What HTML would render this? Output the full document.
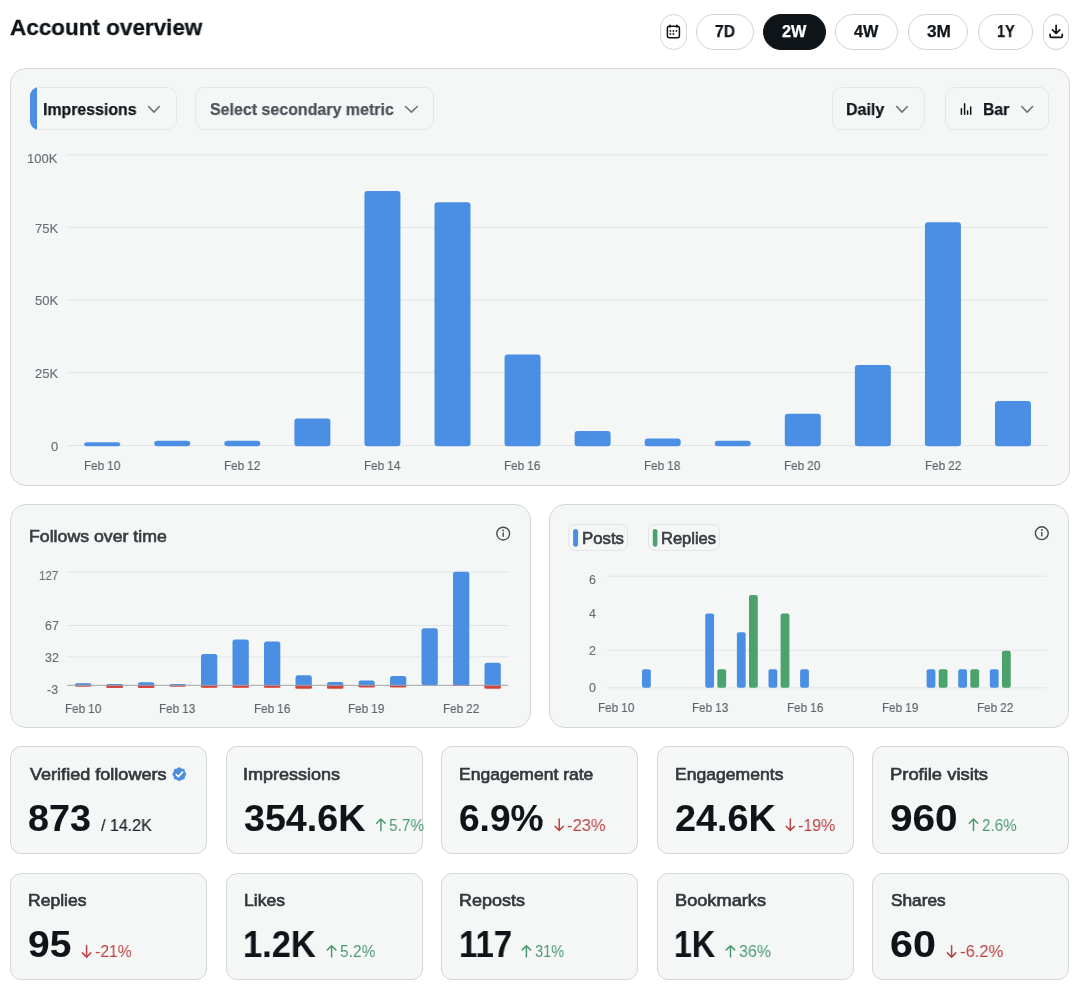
<!DOCTYPE html>
<html><head><meta charset="utf-8"><title>Account overview</title>
<style>
html,body{margin:0;padding:0;background:#ffffff;}
body{width:1080px;height:1002px;position:relative;overflow:hidden;font-family:"Liberation Sans", sans-serif;}
.card{position:absolute;box-sizing:border-box;background:#f5f7f7;border:1px solid #d4d7d8;}
.dd{position:absolute;box-sizing:border-box;background:#f5f7f7;border:1px solid #e5e7e9;border-radius:9px;}
.chip{position:absolute;box-sizing:border-box;background:#f5f7f7;border:1px solid #e3e6e8;border-radius:7px;}
.pill{position:absolute;box-sizing:border-box;border:1px solid #d2d4d5;border-radius:18px;}
.t{position:absolute;white-space:nowrap;line-height:1;transform-origin:0 0;will-change:transform;}
svg.ov{position:absolute;left:0;top:0;}
</style></head><body>
<div class="pill" style="left:660px;top:14px;width:27.0px;height:35.7px;background:#ffffff;border-color:#d2d4d5"></div>
<div class="pill" style="left:696px;top:14px;width:58.0px;height:35.7px;background:#ffffff;border-color:#d2d4d5"></div>
<div class="pill" style="left:763.3px;top:14px;width:62.5px;height:35.7px;background:#0f1419;border-color:#0f1419"></div>
<div class="pill" style="left:835.1px;top:14px;width:62.7px;height:35.7px;background:#ffffff;border-color:#d2d4d5"></div>
<div class="pill" style="left:907.5px;top:14px;width:60.8px;height:35.7px;background:#ffffff;border-color:#d2d4d5"></div>
<div class="pill" style="left:978.3px;top:14px;width:55.0px;height:35.7px;background:#ffffff;border-color:#d2d4d5"></div>
<div class="pill" style="left:1043px;top:14px;width:26.2px;height:35.7px;background:#ffffff;border-color:#d2d4d5"></div>
<div class="card" style="left:10px;top:68px;width:1059.5px;height:418px;border-radius:16px"></div>
<div style="position:absolute;left:30px;top:87px;width:146.5px;height:43px;border-radius:9px;overflow:hidden"><div class="dd" style="left:0;top:0;width:146.5px;height:43px"></div><div style="position:absolute;left:0;top:0;width:6.7px;height:43px;background:#4a8fe3"></div></div>
<div class="dd" style="left:195.2px;top:87px;width:239px;height:43px"></div>
<div class="dd" style="left:831.6px;top:87px;width:93.3px;height:43px"></div>
<div class="dd" style="left:944.9px;top:87px;width:104.4px;height:43px"></div>
<div class="card" style="left:10px;top:504.2px;width:520.5px;height:223.8px;border-radius:16px"></div>
<div class="card" style="left:549px;top:504.2px;width:520px;height:223.8px;border-radius:16px"></div>
<div class="chip" style="left:568.1px;top:523.7px;width:60.2px;height:27.8px"></div>
<div class="chip" style="left:647.8px;top:523.7px;width:72.2px;height:27.8px"></div>
<div class="card" style="left:10.1px;top:746.2px;width:197.3px;height:107.6px;border-radius:11px"></div>
<div class="card" style="left:225.6px;top:746.2px;width:197.3px;height:107.6px;border-radius:11px"></div>
<div class="card" style="left:441.1px;top:746.2px;width:197.3px;height:107.6px;border-radius:11px"></div>
<div class="card" style="left:656.6px;top:746.2px;width:197.3px;height:107.6px;border-radius:11px"></div>
<div class="card" style="left:872.1px;top:746.2px;width:197.3px;height:107.6px;border-radius:11px"></div>
<div class="card" style="left:10.1px;top:872.9px;width:197.3px;height:107.6px;border-radius:11px"></div>
<div class="card" style="left:225.6px;top:872.9px;width:197.3px;height:107.6px;border-radius:11px"></div>
<div class="card" style="left:441.1px;top:872.9px;width:197.3px;height:107.6px;border-radius:11px"></div>
<div class="card" style="left:656.6px;top:872.9px;width:197.3px;height:107.6px;border-radius:11px"></div>
<div class="card" style="left:872.1px;top:872.9px;width:197.3px;height:107.6px;border-radius:11px"></div>
<svg class="ov" width="1080" height="1002" viewBox="0 0 1080 1002">
<g fill="none" stroke="#0f1419" stroke-width="1.5">
<rect x="667.4" y="26.3" width="12" height="11.4" rx="2"/>
</g>
<g fill="#0f1419">
<rect x="669.2" y="24.6" width="1.5" height="3.2" rx="0.6"/><rect x="676.1" y="24.6" width="1.5" height="3.2" rx="0.6"/>
<circle cx="670.4" cy="30.9" r="0.9"/><circle cx="673.4" cy="30.9" r="0.9"/><circle cx="676.4" cy="30.9" r="0.9"/>
<circle cx="670.4" cy="33.9" r="0.9"/><circle cx="673.4" cy="33.9" r="0.9"/>
</g>
<g fill="none" stroke="#0f1419" stroke-width="1.7" stroke-linecap="round" stroke-linejoin="round">
<path d="M1056.1 25.3 V33.3 M1052.5 29.9 L1056.1 33.5 L1059.7 29.9"/>
<path d="M1050.1 34.3 V35.9 Q1050.1 37.3 1051.5 37.3 H1060.9 Q1062.3 37.3 1062.3 35.9 V34.3"/>
</g>
<path d="M148.6 106.5 L153.95 112.1 L159.3 106.5" fill="none" stroke="#717375" stroke-width="1.6" stroke-linecap="round" stroke-linejoin="round"/>
<path d="M405.5 106.5 L411.4 112.1 L417.3 106.5" fill="none" stroke="#717375" stroke-width="1.6" stroke-linecap="round" stroke-linejoin="round"/>
<path d="M896.7 106.5 L902.0 112.1 L907.3 106.5" fill="none" stroke="#717375" stroke-width="1.6" stroke-linecap="round" stroke-linejoin="round"/>
<path d="M1021.7 106.5 L1027.15 112.1 L1032.6 106.5" fill="none" stroke="#717375" stroke-width="1.6" stroke-linecap="round" stroke-linejoin="round"/>
<line x1="961.4" y1="108.7" x2="961.4" y2="114.2" stroke="#0f1419" stroke-width="1.5" stroke-linecap="round"/>
<line x1="964.6" y1="103.7" x2="964.6" y2="114.2" stroke="#0f1419" stroke-width="1.5" stroke-linecap="round"/>
<line x1="967.6" y1="111.0" x2="967.6" y2="114.2" stroke="#0f1419" stroke-width="1.5" stroke-linecap="round"/>
<line x1="970.7" y1="107.10000000000001" x2="970.7" y2="114.2" stroke="#0f1419" stroke-width="1.5" stroke-linecap="round"/>
<rect x="67.5" y="154.3" width="980.5" height="1" fill="#e2e5e7"/>
<rect x="67.5" y="226.9" width="980.5" height="1" fill="#e2e5e7"/>
<rect x="67.5" y="299.5" width="980.5" height="1" fill="#e2e5e7"/>
<rect x="67.5" y="372.1" width="980.5" height="1" fill="#e2e5e7"/>
<rect x="67.5" y="445.0" width="980.5" height="1" fill="#e2e5e7"/>
<rect x="84.20" y="442.2" width="36" height="4.00" rx="3" fill="#4a8fe3"/>
<rect x="154.26" y="440.8" width="36" height="5.40" rx="3" fill="#4a8fe3"/>
<rect x="224.32" y="440.8" width="36" height="5.40" rx="3" fill="#4a8fe3"/>
<rect x="294.38" y="418.6" width="36" height="27.60" rx="3" fill="#4a8fe3"/>
<rect x="364.44" y="191.1" width="36" height="255.10" rx="3" fill="#4a8fe3"/>
<rect x="434.50" y="202.2" width="36" height="244.00" rx="3" fill="#4a8fe3"/>
<rect x="504.56" y="354.4" width="36" height="91.80" rx="3" fill="#4a8fe3"/>
<rect x="574.62" y="431.1" width="36" height="15.10" rx="3" fill="#4a8fe3"/>
<rect x="644.68" y="438.6" width="36" height="7.60" rx="3" fill="#4a8fe3"/>
<rect x="714.74" y="440.8" width="36" height="5.40" rx="3" fill="#4a8fe3"/>
<rect x="784.80" y="413.7" width="36" height="32.50" rx="3" fill="#4a8fe3"/>
<rect x="854.86" y="365" width="36" height="81.20" rx="3" fill="#4a8fe3"/>
<rect x="924.92" y="222.3" width="36" height="223.90" rx="3" fill="#4a8fe3"/>
<rect x="994.98" y="401" width="36" height="45.20" rx="3" fill="#4a8fe3"/>
<circle cx="503.2" cy="533.6" r="6.4" fill="none" stroke="#464b50" stroke-width="1.4"/><rect x="502.5" y="532.4" width="1.4" height="4.4" fill="#464b50"/><circle cx="503.2" cy="530.4" r="0.9" fill="#464b50"/>
<rect x="67.3" y="571.5" width="441" height="1" fill="#e2e5e7"/>
<rect x="67.3" y="625.0" width="441" height="1" fill="#e2e5e7"/>
<rect x="67.3" y="656.3" width="441" height="1" fill="#e2e5e7"/>
<rect x="75.00" y="683.80" width="16.3" height="2.60" rx="2" fill="#d2423f"/>
<rect x="75.00" y="683.2" width="16.3" height="2.30" rx="2.5" fill="#4a8fe3"/>
<rect x="75.00" y="685.30" width="16.3" height="1.10" fill="#d2423f"/>
<rect x="106.50" y="684.60" width="16.3" height="3.20" rx="2" fill="#d2423f"/>
<rect x="106.50" y="684" width="16.3" height="1.50" rx="2.5" fill="#4a8fe3"/>
<rect x="106.50" y="685.30" width="16.3" height="2.50" fill="#d2423f"/>
<rect x="138.00" y="683.30" width="16.3" height="4.50" rx="2" fill="#d2423f"/>
<rect x="138.00" y="682.2" width="16.3" height="3.30" rx="2.5" fill="#4a8fe3"/>
<rect x="138.00" y="685.30" width="16.3" height="2.50" fill="#d2423f"/>
<rect x="169.50" y="684.60" width="16.3" height="1.80" rx="2" fill="#d2423f"/>
<rect x="169.50" y="684" width="16.3" height="1.50" rx="2.5" fill="#4a8fe3"/>
<rect x="169.50" y="685.30" width="16.3" height="1.10" fill="#d2423f"/>
<rect x="201.00" y="683.30" width="16.3" height="4.30" rx="2" fill="#d2423f"/>
<rect x="201.00" y="653.9" width="16.3" height="31.60" rx="2.5" fill="#4a8fe3"/>
<rect x="201.00" y="685.30" width="16.3" height="2.30" fill="#d2423f"/>
<rect x="232.50" y="683.30" width="16.3" height="4.30" rx="2" fill="#d2423f"/>
<rect x="232.50" y="639.4" width="16.3" height="46.10" rx="2.5" fill="#4a8fe3"/>
<rect x="232.50" y="685.30" width="16.3" height="2.30" fill="#d2423f"/>
<rect x="264.00" y="683.30" width="16.3" height="4.30" rx="2" fill="#d2423f"/>
<rect x="264.00" y="641.4" width="16.3" height="44.10" rx="2.5" fill="#4a8fe3"/>
<rect x="264.00" y="685.30" width="16.3" height="2.30" fill="#d2423f"/>
<rect x="295.50" y="683.30" width="16.3" height="5.20" rx="2" fill="#d2423f"/>
<rect x="295.50" y="675.3" width="16.3" height="10.20" rx="2.5" fill="#4a8fe3"/>
<rect x="295.50" y="685.30" width="16.3" height="3.20" fill="#d2423f"/>
<rect x="327.00" y="683.30" width="16.3" height="5.20" rx="2" fill="#d2423f"/>
<rect x="327.00" y="682" width="16.3" height="3.50" rx="2.5" fill="#4a8fe3"/>
<rect x="327.00" y="685.30" width="16.3" height="3.20" fill="#d2423f"/>
<rect x="358.50" y="683.30" width="16.3" height="4.00" rx="2" fill="#d2423f"/>
<rect x="358.50" y="680.6" width="16.3" height="4.90" rx="2.5" fill="#4a8fe3"/>
<rect x="358.50" y="685.30" width="16.3" height="2.00" fill="#d2423f"/>
<rect x="390.00" y="683.30" width="16.3" height="4.00" rx="2" fill="#d2423f"/>
<rect x="390.00" y="676" width="16.3" height="9.50" rx="2.5" fill="#4a8fe3"/>
<rect x="390.00" y="685.30" width="16.3" height="2.00" fill="#d2423f"/>
<rect x="421.50" y="628.3" width="16.3" height="57.20" rx="2.5" fill="#4a8fe3"/>
<rect x="453.00" y="683.30" width="16.3" height="2.70" rx="2" fill="#d2423f"/>
<rect x="453.00" y="571.8" width="16.3" height="113.70" rx="2.5" fill="#4a8fe3"/>
<rect x="453.00" y="685.30" width="16.3" height="0.70" fill="#d2423f"/>
<rect x="484.50" y="683.30" width="16.3" height="5.20" rx="2" fill="#d2423f"/>
<rect x="484.50" y="662.8" width="16.3" height="22.70" rx="2.5" fill="#4a8fe3"/>
<rect x="484.50" y="685.30" width="16.3" height="3.20" fill="#d2423f"/>
<rect x="67.3" y="684.8" width="441" height="1" fill="#9ea3a8"/>
<rect x="573.1" y="529" width="5" height="17.7" rx="2.5" fill="#4a8fe3"/>
<rect x="652.8" y="529" width="4.6" height="17.7" rx="2.3" fill="#4aa26c"/>
<circle cx="1041.8" cy="533.2" r="6.4" fill="none" stroke="#464b50" stroke-width="1.4"/><rect x="1041.1" y="532.0" width="1.4" height="4.4" fill="#464b50"/><circle cx="1041.8" cy="530.0" r="0.9" fill="#464b50"/>
<rect x="607.5" y="575.7" width="440" height="1" fill="#e2e5e7"/>
<rect x="607.5" y="649.8" width="440" height="1" fill="#e2e5e7"/>
<rect x="607.5" y="687.3" width="440" height="1" fill="#e2e5e7"/>
<rect x="642.02" y="669.25" width="8.8" height="18.55" rx="2" fill="#4a8fe3"/>
<rect x="705.26" y="613.60" width="8.8" height="74.20" rx="2" fill="#4a8fe3"/>
<rect x="736.88" y="632.15" width="8.8" height="55.65" rx="2" fill="#4a8fe3"/>
<rect x="768.50" y="669.25" width="8.8" height="18.55" rx="2" fill="#4a8fe3"/>
<rect x="800.12" y="669.25" width="8.8" height="18.55" rx="2" fill="#4a8fe3"/>
<rect x="926.60" y="669.25" width="8.8" height="18.55" rx="2" fill="#4a8fe3"/>
<rect x="958.22" y="669.25" width="8.8" height="18.55" rx="2" fill="#4a8fe3"/>
<rect x="989.84" y="669.25" width="8.8" height="18.55" rx="2" fill="#4a8fe3"/>
<rect x="717.36" y="669.25" width="8.8" height="18.55" rx="2" fill="#4aa26c"/>
<rect x="748.98" y="595.05" width="8.8" height="92.75" rx="2" fill="#4aa26c"/>
<rect x="780.60" y="613.60" width="8.8" height="74.20" rx="2" fill="#4aa26c"/>
<rect x="938.70" y="669.25" width="8.8" height="18.55" rx="2" fill="#4aa26c"/>
<rect x="970.32" y="669.25" width="8.8" height="18.55" rx="2" fill="#4aa26c"/>
<rect x="1001.94" y="650.70" width="8.8" height="37.10" rx="2" fill="#4aa26c"/>
<path d="M380.90000000000003 830.4 V819.2 M376.70000000000005 823.2 L380.90000000000003 819.0 L385.1 823.2" fill="none" stroke="#4d9a71" stroke-width="1.5" stroke-linecap="round" stroke-linejoin="round"/>
<path d="M559.1999999999999 819.0 V830.2 M554.9999999999999 826.2 L559.1999999999999 830.4 L563.4 826.2" fill="none" stroke="#b94342" stroke-width="1.5" stroke-linecap="round" stroke-linejoin="round"/>
<path d="M790.3 819.0 V830.2 M786.0999999999999 826.2 L790.3 830.4 L794.5 826.2" fill="none" stroke="#b94342" stroke-width="1.5" stroke-linecap="round" stroke-linejoin="round"/>
<path d="M973.5 830.4 V819.2 M969.3 823.2 L973.5 819.0 L977.7 823.2" fill="none" stroke="#4d9a71" stroke-width="1.5" stroke-linecap="round" stroke-linejoin="round"/>
<path d="M86.6 945.6999999999999 V956.9 M82.39999999999999 952.9 L86.6 957.0999999999999 L90.8 952.9" fill="none" stroke="#b94342" stroke-width="1.5" stroke-linecap="round" stroke-linejoin="round"/>
<path d="M331.6 957.0999999999999 V945.9 M327.40000000000003 949.9 L331.6 945.6999999999999 L335.8 949.9" fill="none" stroke="#4d9a71" stroke-width="1.5" stroke-linecap="round" stroke-linejoin="round"/>
<path d="M526.4 957.0999999999999 V945.9 M522.1999999999999 949.9 L526.4 945.6999999999999 L530.6 949.9" fill="none" stroke="#4d9a71" stroke-width="1.5" stroke-linecap="round" stroke-linejoin="round"/>
<path d="M730.5 957.0999999999999 V945.9 M726.3 949.9 L730.5 945.6999999999999 L734.7 949.9" fill="none" stroke="#4d9a71" stroke-width="1.5" stroke-linecap="round" stroke-linejoin="round"/>
<path d="M951.5999999999999 945.6999999999999 V956.9 M947.3999999999999 952.9 L951.5999999999999 957.0999999999999 L955.8 952.9" fill="none" stroke="#b94342" stroke-width="1.5" stroke-linecap="round" stroke-linejoin="round"/>
<path d="M179.30 767.70 L181.41 769.01 L183.83 769.57 L184.39 771.99 L185.70 774.10 L184.39 776.21 L183.83 778.63 L181.41 779.19 L179.30 780.50 L177.19 779.19 L174.77 778.63 L174.21 776.21 L172.90 774.10 L174.21 771.99 L174.77 769.57 L177.19 769.01Z" fill="#4a8fe3" stroke="#4a8fe3" stroke-width="1.3" stroke-linejoin="round"/>
<path d="M176.20000000000002 774.5 L178.4 776.6 L182.60000000000002 772.1" fill="none" stroke="#fff" stroke-width="1.6" stroke-linecap="round" stroke-linejoin="round"/>
</svg>
<div class="t" style="left:9.75px;top:16.00px;font-size:22.8px;font-weight:bold;color:#0f1419;transform:scaleX(0.9860);-webkit-text-stroke:0.3px #0f1419;">Account overview</div>
<div class="t" style="left:714.98px;top:24.00px;font-size:16px;font-weight:bold;color:#0f1419;transform:scaleX(0.9742);-webkit-text-stroke:0.25px #0f1419;">7D</div>
<div class="t" style="left:781.91px;top:24.00px;font-size:16px;font-weight:bold;color:#ffffff;transform:scaleX(1.0162);-webkit-text-stroke:0.25px #ffffff;">2W</div>
<div class="t" style="left:854.14px;top:24.00px;font-size:16px;font-weight:bold;color:#0f1419;transform:scaleX(1.0151);-webkit-text-stroke:0.25px #0f1419;">4W</div>
<div class="t" style="left:926.66px;top:24.00px;font-size:16px;font-weight:bold;color:#0f1419;transform:scaleX(1.0766);-webkit-text-stroke:0.25px #0f1419;">3M</div>
<div class="t" style="left:996.63px;top:24.00px;font-size:16px;font-weight:bold;color:#0f1419;transform:scaleX(0.9028);-webkit-text-stroke:0.25px #0f1419;">1Y</div>
<div class="t" style="left:42.85px;top:101.00px;font-size:17px;font-weight:bold;color:#0f1419;transform:scaleX(0.9339);-webkit-text-stroke:0.25px #0f1419;">Impressions</div>
<div class="t" style="left:210.08px;top:101.00px;font-size:17px;font-weight:bold;color:#4b5258;transform:scaleX(0.9394);-webkit-text-stroke:0.25px #4b5258;">Select secondary metric</div>
<div class="t" style="left:845.74px;top:101.00px;font-size:17px;font-weight:bold;color:#0f1419;transform:scaleX(0.9401);-webkit-text-stroke:0.25px #0f1419;">Daily</div>
<div class="t" style="left:982.86px;top:101.00px;font-size:17px;font-weight:bold;color:#0f1419;transform:scaleX(0.9238);-webkit-text-stroke:0.25px #0f1419;">Bar</div>
<div class="t" style="left:27.43px;top:152.00px;font-size:13px;font-weight:normal;color:#687076;-webkit-text-stroke:0.15px #687076;">100K</div>
<div class="t" style="left:34.66px;top:221.50px;font-size:13px;font-weight:normal;color:#687076;-webkit-text-stroke:0.15px #687076;">75K</div>
<div class="t" style="left:34.66px;top:294.00px;font-size:13px;font-weight:normal;color:#687076;-webkit-text-stroke:0.15px #687076;">50K</div>
<div class="t" style="left:34.66px;top:366.60px;font-size:13px;font-weight:normal;color:#687076;-webkit-text-stroke:0.15px #687076;">25K</div>
<div class="t" style="left:50.94px;top:439.50px;font-size:13px;font-weight:normal;color:#687076;-webkit-text-stroke:0.15px #687076;">0</div>
<div class="t" style="left:83.80px;top:460.40px;font-size:12.4px;font-weight:normal;color:#5d6368;transform:scaleX(0.9400);-webkit-text-stroke:0.15px #5d6368;">Feb 10</div>
<div class="t" style="left:223.98px;top:460.40px;font-size:12.4px;font-weight:normal;color:#5d6368;transform:scaleX(0.9400);-webkit-text-stroke:0.15px #5d6368;">Feb 12</div>
<div class="t" style="left:363.98px;top:460.40px;font-size:12.4px;font-weight:normal;color:#5d6368;transform:scaleX(0.9400);-webkit-text-stroke:0.15px #5d6368;">Feb 14</div>
<div class="t" style="left:504.16px;top:460.40px;font-size:12.4px;font-weight:normal;color:#5d6368;transform:scaleX(0.9400);-webkit-text-stroke:0.15px #5d6368;">Feb 16</div>
<div class="t" style="left:644.28px;top:460.40px;font-size:12.4px;font-weight:normal;color:#5d6368;transform:scaleX(0.9400);-webkit-text-stroke:0.15px #5d6368;">Feb 18</div>
<div class="t" style="left:784.40px;top:460.40px;font-size:12.4px;font-weight:normal;color:#5d6368;transform:scaleX(0.9400);-webkit-text-stroke:0.15px #5d6368;">Feb 20</div>
<div class="t" style="left:924.58px;top:460.40px;font-size:12.4px;font-weight:normal;color:#5d6368;transform:scaleX(0.9400);-webkit-text-stroke:0.15px #5d6368;">Feb 22</div>
<div class="t" style="left:28.88px;top:528.70px;font-size:16.7px;font-weight:normal;color:#383d42;transform:scaleX(1.0611);-webkit-text-stroke:0.65px #383d42;">Follows over time</div>
<div class="t" style="left:39.09px;top:570.20px;font-size:12.4px;font-weight:normal;color:#687076;transform:scaleX(0.9300);-webkit-text-stroke:0.15px #687076;">127</div>
<div class="t" style="left:44.58px;top:620.30px;font-size:12.4px;font-weight:normal;color:#687076;-webkit-text-stroke:0.15px #687076;">67</div>
<div class="t" style="left:44.58px;top:652.30px;font-size:12.4px;font-weight:normal;color:#687076;-webkit-text-stroke:0.15px #687076;">32</div>
<div class="t" style="left:47.22px;top:683.60px;font-size:12.4px;font-weight:normal;color:#687076;-webkit-text-stroke:0.15px #687076;">-3</div>
<div class="t" style="left:64.80px;top:702.80px;font-size:12.4px;font-weight:normal;color:#5d6368;transform:scaleX(0.9400);-webkit-text-stroke:0.15px #5d6368;">Feb 10</div>
<div class="t" style="left:159.30px;top:702.80px;font-size:12.4px;font-weight:normal;color:#5d6368;transform:scaleX(0.9400);-webkit-text-stroke:0.15px #5d6368;">Feb 13</div>
<div class="t" style="left:253.80px;top:702.80px;font-size:12.4px;font-weight:normal;color:#5d6368;transform:scaleX(0.9400);-webkit-text-stroke:0.15px #5d6368;">Feb 16</div>
<div class="t" style="left:348.36px;top:702.80px;font-size:12.4px;font-weight:normal;color:#5d6368;transform:scaleX(0.9400);-webkit-text-stroke:0.15px #5d6368;">Feb 19</div>
<div class="t" style="left:442.86px;top:702.80px;font-size:12.4px;font-weight:normal;color:#5d6368;transform:scaleX(0.9400);-webkit-text-stroke:0.15px #5d6368;">Feb 22</div>
<div class="t" style="left:581.66px;top:529.50px;font-size:16.5px;font-weight:normal;color:#383d42;transform:scaleX(1.0164);-webkit-text-stroke:0.65px #383d42;">Posts</div>
<div class="t" style="left:661.29px;top:529.50px;font-size:16.5px;font-weight:normal;color:#383d42;transform:scaleX(0.9923);-webkit-text-stroke:0.65px #383d42;">Replies</div>
<div class="t" style="left:589.15px;top:573.80px;font-size:12.4px;font-weight:normal;color:#687076;-webkit-text-stroke:0.15px #687076;">6</div>
<div class="t" style="left:589.03px;top:607.90px;font-size:12.4px;font-weight:normal;color:#687076;-webkit-text-stroke:0.15px #687076;">4</div>
<div class="t" style="left:589.28px;top:645.20px;font-size:12.4px;font-weight:normal;color:#687076;-webkit-text-stroke:0.15px #687076;">2</div>
<div class="t" style="left:589.15px;top:682.30px;font-size:12.4px;font-weight:normal;color:#687076;-webkit-text-stroke:0.15px #687076;">0</div>
<div class="t" style="left:597.50px;top:701.80px;font-size:12.4px;font-weight:normal;color:#5d6368;transform:scaleX(0.9400);-webkit-text-stroke:0.15px #5d6368;">Feb 10</div>
<div class="t" style="left:692.36px;top:701.80px;font-size:12.4px;font-weight:normal;color:#5d6368;transform:scaleX(0.9400);-webkit-text-stroke:0.15px #5d6368;">Feb 13</div>
<div class="t" style="left:787.22px;top:701.80px;font-size:12.4px;font-weight:normal;color:#5d6368;transform:scaleX(0.9400);-webkit-text-stroke:0.15px #5d6368;">Feb 16</div>
<div class="t" style="left:882.14px;top:701.80px;font-size:12.4px;font-weight:normal;color:#5d6368;transform:scaleX(0.9400);-webkit-text-stroke:0.15px #5d6368;">Feb 19</div>
<div class="t" style="left:977.00px;top:701.80px;font-size:12.4px;font-weight:normal;color:#5d6368;transform:scaleX(0.9400);-webkit-text-stroke:0.15px #5d6368;">Feb 22</div>
<div class="t" style="left:29.60px;top:765.70px;font-size:17px;font-weight:normal;color:#32373b;transform:scaleX(1.0625);-webkit-text-stroke:0.65px #32373b;">Verified followers</div>
<div class="t" style="left:28.47px;top:800.60px;font-size:36.8px;font-weight:bold;color:#0f1419;transform:scaleX(1.0243);-webkit-text-stroke:0.1px #0f1419;">873</div>
<div class="t" style="left:101.10px;top:816.60px;font-size:17px;font-weight:normal;color:#1f2328;transform:scaleX(0.9432);-webkit-text-stroke:0.2px #1f2328;">/ 14.2K</div>
<div class="t" style="left:243.48px;top:765.70px;font-size:17px;font-weight:normal;color:#32373b;transform:scaleX(1.0591);-webkit-text-stroke:0.65px #32373b;">Impressions</div>
<div class="t" style="left:244.35px;top:800.60px;font-size:36.8px;font-weight:bold;color:#0f1419;transform:scaleX(1.0225);-webkit-text-stroke:0.1px #0f1419;">354.6K</div>
<div class="t" style="left:389.09px;top:816.60px;font-size:17px;font-weight:normal;color:#4d9a71;transform:scaleX(0.9023);">5.7%</div>
<div class="t" style="left:459.20px;top:765.70px;font-size:17px;font-weight:normal;color:#32373b;transform:scaleX(1.0300);-webkit-text-stroke:0.65px #32373b;">Engagement rate</div>
<div class="t" style="left:459.49px;top:800.60px;font-size:36.8px;font-weight:bold;color:#0f1419;transform:scaleX(1.0065);-webkit-text-stroke:0.1px #0f1419;">6.9%</div>
<div class="t" style="left:567.34px;top:816.60px;font-size:17px;font-weight:normal;color:#b94342;transform:scaleX(0.9764);">-23%</div>
<div class="t" style="left:674.69px;top:765.70px;font-size:17px;font-weight:normal;color:#32373b;transform:scaleX(1.0336);-webkit-text-stroke:0.65px #32373b;">Engagements</div>
<div class="t" style="left:674.97px;top:800.60px;font-size:36.8px;font-weight:bold;color:#0f1419;transform:scaleX(1.0266);-webkit-text-stroke:0.1px #0f1419;">24.6K</div>
<div class="t" style="left:798.46px;top:816.60px;font-size:17px;font-weight:normal;color:#b94342;transform:scaleX(0.9400);">-19%</div>
<div class="t" style="left:890.13px;top:765.70px;font-size:17px;font-weight:normal;color:#32373b;transform:scaleX(1.0809);-webkit-text-stroke:0.65px #32373b;">Profile visits</div>
<div class="t" style="left:890.38px;top:800.60px;font-size:36.8px;font-weight:bold;color:#0f1419;transform:scaleX(1.1024);-webkit-text-stroke:0.1px #0f1419;">960</div>
<div class="t" style="left:981.54px;top:816.60px;font-size:17px;font-weight:normal;color:#4d9a71;transform:scaleX(0.8930);">2.6%</div>
<div class="t" style="left:28.20px;top:892.40px;font-size:17px;font-weight:normal;color:#32373b;transform:scaleX(1.0324);-webkit-text-stroke:0.65px #32373b;">Replies</div>
<div class="t" style="left:28.43px;top:927.30px;font-size:36.8px;font-weight:bold;color:#0f1419;transform:scaleX(1.0575);-webkit-text-stroke:0.1px #0f1419;">95</div>
<div class="t" style="left:94.77px;top:943.30px;font-size:17px;font-weight:normal;color:#b94342;transform:scaleX(0.9270);">-21%</div>
<div class="t" style="left:243.70px;top:892.40px;font-size:17px;font-weight:normal;color:#32373b;transform:scaleX(1.0313);-webkit-text-stroke:0.65px #32373b;">Likes</div>
<div class="t" style="left:243.04px;top:927.30px;font-size:36.8px;font-weight:bold;color:#0f1419;transform:scaleX(0.9345);-webkit-text-stroke:0.1px #0f1419;">1.2K</div>
<div class="t" style="left:339.78px;top:943.30px;font-size:17px;font-weight:normal;color:#4d9a71;transform:scaleX(0.9102);">5.2%</div>
<div class="t" style="left:459.16px;top:892.40px;font-size:17px;font-weight:normal;color:#32373b;transform:scaleX(1.0580);-webkit-text-stroke:0.65px #32373b;">Reposts</div>
<div class="t" style="left:458.63px;top:927.30px;font-size:36.8px;font-weight:bold;color:#0f1419;transform:scaleX(0.8920);-webkit-text-stroke:0.1px #0f1419;">117</div>
<div class="t" style="left:534.76px;top:943.30px;font-size:17px;font-weight:normal;color:#4d9a71;transform:scaleX(0.8540);">31%</div>
<div class="t" style="left:674.64px;top:892.40px;font-size:17px;font-weight:normal;color:#32373b;transform:scaleX(1.0703);-webkit-text-stroke:0.65px #32373b;">Bookmarks</div>
<div class="t" style="left:674.17px;top:927.30px;font-size:36.8px;font-weight:bold;color:#0f1419;transform:scaleX(0.8737);-webkit-text-stroke:0.1px #0f1419;">1K</div>
<div class="t" style="left:738.82px;top:943.30px;font-size:17px;font-weight:normal;color:#4d9a71;transform:scaleX(0.9388);">36%</div>
<div class="t" style="left:890.91px;top:892.40px;font-size:17px;font-weight:normal;color:#32373b;transform:scaleX(1.0157);-webkit-text-stroke:0.65px #32373b;">Shares</div>
<div class="t" style="left:890.36px;top:927.30px;font-size:36.8px;font-weight:bold;color:#0f1419;transform:scaleX(1.1195);-webkit-text-stroke:0.1px #0f1419;">60</div>
<div class="t" style="left:959.74px;top:943.30px;font-size:17px;font-weight:normal;color:#b94342;transform:scaleX(0.9761);">-6.2%</div>
</body></html>
